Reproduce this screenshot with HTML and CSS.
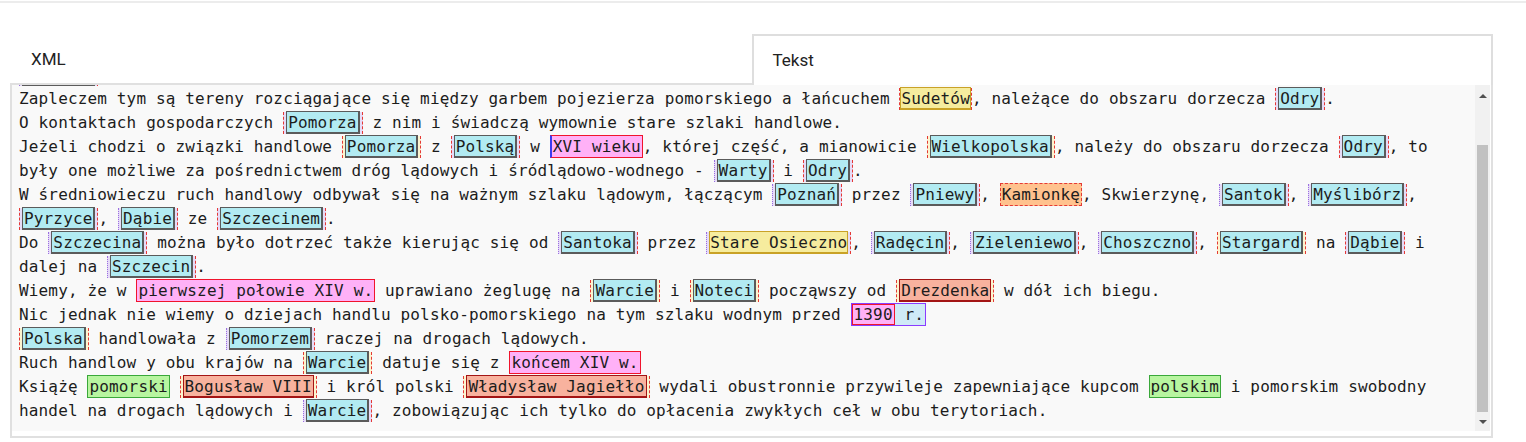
FILE: index.html
```html
<!DOCTYPE html>
<html lang="pl">
<head>
<meta charset="utf-8">
<title>Tekst</title>
<link rel="stylesheet" href="styles.css">
</head>
<body>
<div class="page">
  <div class="tabs">
    <div class="tab">XML</div>
    <div class="tab active">Tekst</div>
  </div>
  <div class="panel">
    <div class="scroll">
      <div class="txt">
        <div class="ln">Handel <span class="a"><span class="loc">Pomorza</span></span> z zapleczem lądowym rozwijał się od wczesnego średniowiecza.</div>
        <div class="ln"><span class="a p"><span class="loc">Pomorze</span></span> Zachodnie posiadało rozległe zaplecze gospodarcze.</div>
        <div class="ln">Zapleczem tym są tereny rozciągające się między garbem pojezierza pomorskiego a łańcuchem <span class="a t"><span class="yel">Sudetów</span></span>, należące do obszaru dorzecza <span class="a"><span class="loc">Odry</span></span>.</div>
        <div class="ln">O kontaktach gospodarczych <span class="a"><span class="loc">Pomorza</span></span> z nim i świadczą wymownie stare szlaki handlowe.</div>
        <div class="ln">Jeżeli chodzi o związki handlowe <span class="a y"><span class="loc">Pomorza</span></span> z <span class="a"><span class="loc">Polską</span></span> w <span class="tm b">XVI wieku</span>, której część, a mianowicie <span class="a y"><span class="loc">Wielkopolska</span></span>, należy do obszaru dorzecza <span class="a"><span class="loc">Odry</span></span>, to były one możliwe za pośrednictwem dróg lądowych i śródlądowo-wodnego - <span class="a p"><span class="loc">Warty</span></span> i <span class="a"><span class="loc">Odry</span></span>.</div>
        <div class="ln">W średniowieczu ruch handlowy odbywał się na ważnym szlaku lądowym, łączącym <span class="a p"><span class="loc">Poznań</span></span> przez <span class="a p"><span class="loc">Pniewy</span></span>, <span class="org">Kamionkę</span>, Skwierzynę, <span class="a p"><span class="loc">Santok</span></span>, <span class="a p"><span class="loc">Myślibórz</span></span>, <span class="a"><span class="loc">Pyrzyce</span></span>, <span class="a p"><span class="loc">Dąbie</span></span> ze <span class="a"><span class="loc">Szczecinem</span></span>.</div>
        <div class="ln">Do <span class="a p"><span class="loc">Szczecina</span></span> można było dotrzeć także kierując się od <span class="a p"><span class="loc">Santoka</span></span> przez <span class="a p"><span class="yel">Stare Osieczno</span></span>, <span class="a p"><span class="loc">Radęcin</span></span>, <span class="a p"><span class="loc">Zieleniewo</span></span>, <span class="a p"><span class="loc">Choszczno</span></span>, <span class="a y"><span class="loc">Stargard</span></span> na <span class="a"><span class="loc">Dąbie</span></span> i dalej na <span class="a p"><span class="loc">Szczecin</span></span>.</div>
        <div class="ln">Wiemy, że w <span class="tm">pierwszej połowie XIV w.</span> uprawiano żeglugę na <span class="a y"><span class="loc">Warcie</span></span> i <span class="a y"><span class="loc">Noteci</span></span> począwszy od <span class="a y"><span class="per">Drezdenka</span></span> w dół ich biegu.</div>
        <div class="ln">Nic jednak nie wiemy o dziejach handlu polsko-pomorskiego na tym szlaku wodnym przed <span class="grp"><span class="tm">1390</span> r.</span></div>
        <div class="ln"><span class="a y"><span class="loc">Polska</span></span> handlowała z <span class="a p"><span class="loc">Pomorzem</span></span> raczej na drogach lądowych.</div>
        <div class="ln">Ruch handlow y obu krajów na <span class="a y"><span class="loc">Warcie</span></span> datuje się z <span class="tm">końcem XIV w.</span></div>
        <div class="ln">Książę <span class="grn">pomorski</span> <span class="a y"><span class="per">Bogusław VIII</span></span> i król polski <span class="a y"><span class="per">Władysław Jagiełło</span></span> wydali obustronnie przywileje zapewniające kupcom <span class="grn">polskim</span> i pomorskim swobodny handel na drogach lądowych i <span class="a p"><span class="loc">Warcie</span></span>, zobowiązując ich tylko do opłacenia zwykłych ceł w obu terytoriach.</div>
      </div>
    </div>
    <div class="sbar">
      <div class="sb-btn"><span class="arr up"></span></div>
      <div class="sb-track"><div class="sb-thumb"></div></div>
      <div class="sb-btn"><span class="arr down"></span></div>
    </div>
  </div>
</div>
<script src="script.js"></script>
</body>
</html>
```
FILE: styles.css
```css
html, body {
  margin: 0;
  padding: 0;
  background: #ffffff;
}

.page {
  margin-top: 1px;
  border-top: 2px solid #ececec;
  padding: 31px 33px 0 10px;
}

.tabs {
  display: flex;
}

.tab {
  flex: 1 1 0;
  height: 49px;
  display: flex;
  align-items: center;
  padding: 0 0 2px 19px;
  border: 2px solid transparent;
  border-bottom: none;
  font-family: Roboto, "Liberation Sans", sans-serif;
  font-size: 17px;
  color: #222;
  box-sizing: border-box;
}

.tab.active {
  border-color: #dedede;
  background: #fff;
  height: 51px;
  margin-bottom: -2px;
  position: relative;
  z-index: 1;
}

.panel {
  display: flex;
  border: 2px solid #e0e0e0;
  background: #fff;
  padding: 0 1px 5px 0;
}

.scroll {
  flex: 1 1 auto;
  height: 346px;
  overflow: hidden;
  background: #f9f9f9;
}

.txt {
  padding: 12px 7px 10px 7px;
  font-family: "DejaVu Sans Mono", monospace;
  font-size: 16px;
  letter-spacing: 0.15px;
  line-height: 24px;
  color: #1c1c1c;
}

/* fake scrollbar */
.sbar {
  flex: 0 0 15px;
  height: 346px;
  display: flex;
  flex-direction: column;
  background: #f1f1f1;
}

.sb-btn {
  height: 15px;
  display: flex;
  align-items: center;
  justify-content: center;
}

.arr {
  width: 0;
  height: 0;
  border-left: 4px solid transparent;
  border-right: 4px solid transparent;
}

.arr.up {
  border-bottom: 4px solid #505050;
  margin-top: 6px;
}

.arr.down {
  border-top: 4px solid #505050;
  margin-bottom: 4px;
}

.sb-track {
  flex: 1 1 auto;
}

.sb-thumb {
  margin: 45px 2px 0;
  height: 267px;
  background: #c1c1c1;
}

/* annotations */
.a {
  border-left: 1px dashed #e53935;
  border-right: 1px dashed #e53935;
  padding: 1px 2px 2px;
  background: #e6dbf7;
}

.a.y {
  background: #fcf4cf;
}

.a.p {
  border-left: 1px dotted #9a6ee0;
}

.a.t {
  padding: 1px 0 2px;
  background: none;
}

.loc {
  background: #b2ebf2;
  border: 1px solid #5b5b5b;
  border-right-width: 2px;
  border-bottom-width: 2px;
  padding: 1px 1px 0;
}

.yel {
  background: #f6ec9e;
  border: 1px solid #c9a227;
  border-bottom-width: 2px;
  padding: 1px 0 0;
}

.tm {
  background: #ffb1f7;
  border: 1px solid #f0142d;
  padding: 1px 1px 1px;
}

.tm.b {
  border-left: 2px solid #3b3bf0;
}

.org {
  background: #ffc28e;
  border: 1px dashed #e53935;
  padding: 1px 1px 1px;
}

.per {
  background: #f8b29e;
  border: 1px solid #a31515;
  border-bottom-width: 2px;
  padding: 1px 1px 0;
}

.grn {
  background: #b8f5a0;
  border: 1px solid #3aa83a;
  padding: 1px 1px;
}

.grp {
  background: #cfeaf7;
  border: 1px solid #8a3cff;
  padding: 1px 1px 1px 0;
}

.grp .tm {
  padding: 0 1px;
}
```
FILE: script.js
```js
document.querySelector('.scroll').scrollTop = 58;
```
